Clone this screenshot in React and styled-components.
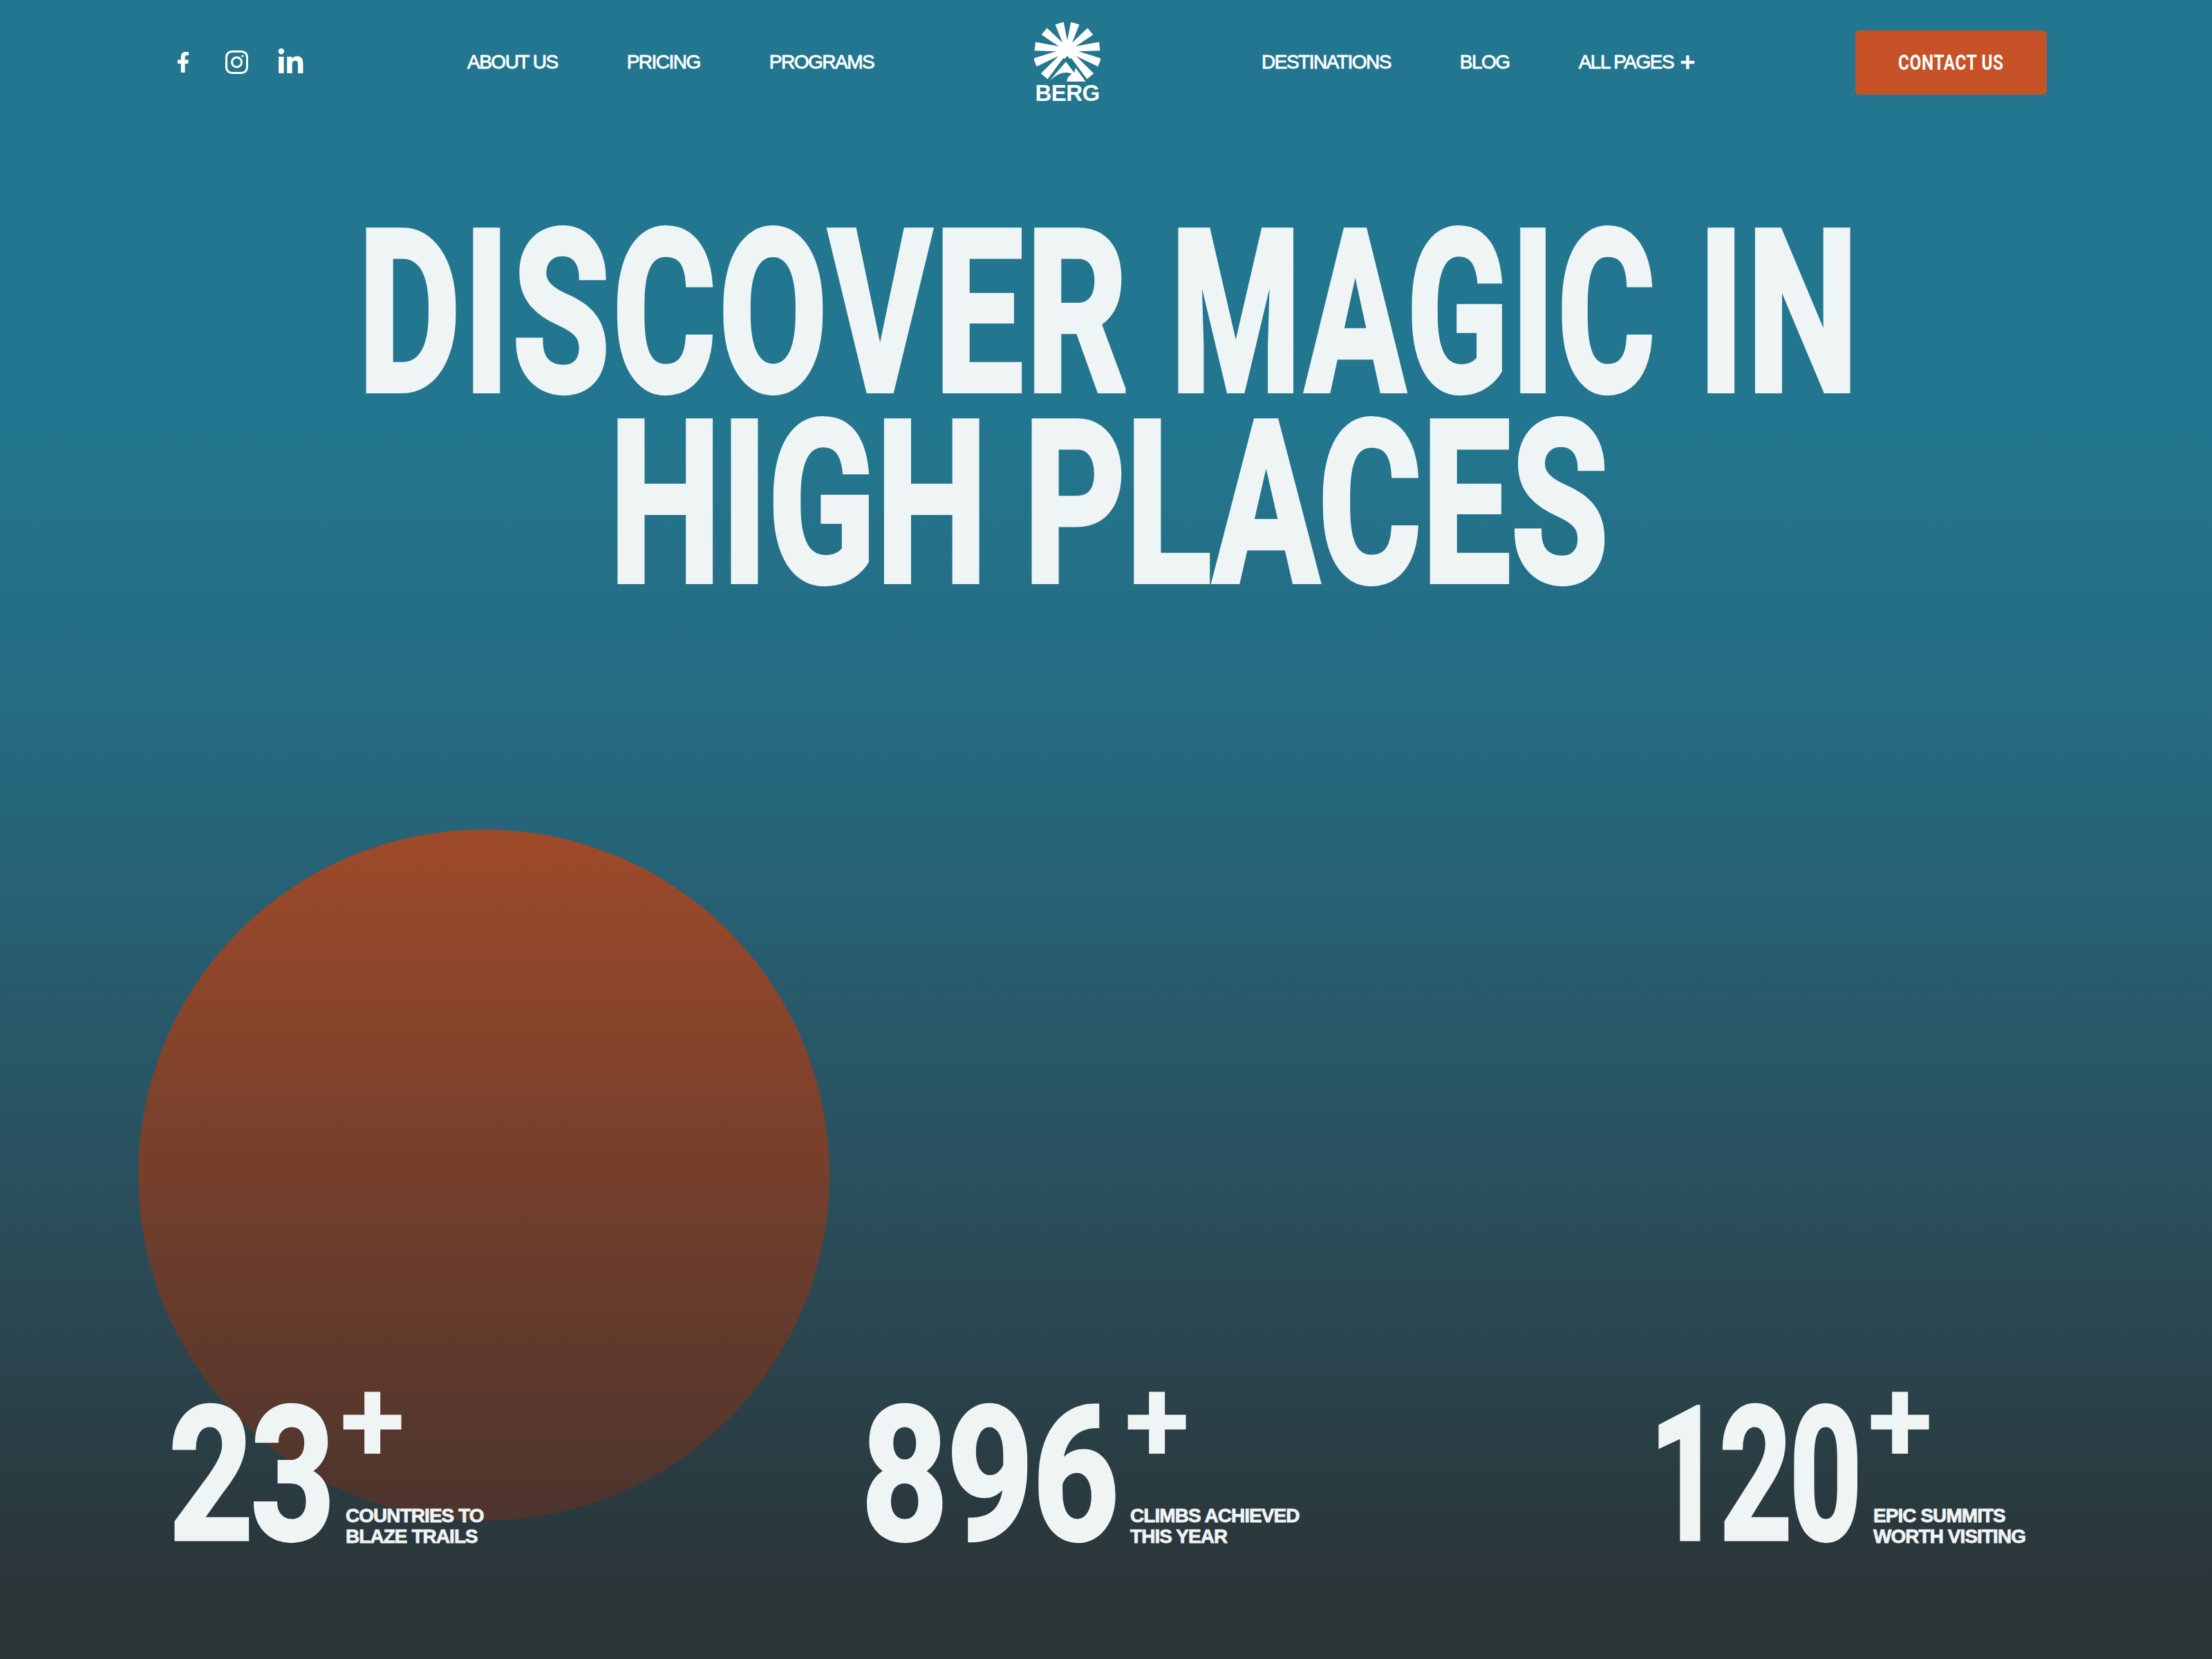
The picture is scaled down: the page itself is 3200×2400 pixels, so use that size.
import React from "react";
import styled, { createGlobalStyle } from "styled-components";
import { FaFacebookF, FaLinkedinIn } from "react-icons/fa";

const GlobalStyle = createGlobalStyle`
  html, body { margin: 0; padding: 0; background: #2a3336; }
  * { box-sizing: border-box; }
`;

const Page = styled.div`
  position: relative;
  width: 3200px;
  height: 2400px;
  overflow: hidden;
  display: flex;
  flex-direction: column;
  color: #eff4f5;
  font-family: "Liberation Sans", Arial, sans-serif;
  background: linear-gradient(180deg, #23768f 0%, #23768f 26%, #25697f 45%, #2a4f5c 72%, #2a3437 96%, #2a3336 100%);
`;

const Sun = styled.div`
  position: absolute;
  left: 200px;
  top: 1200px;
  width: 1000px;
  height: 1000px;
  border-radius: 50%;
  background: linear-gradient(180deg, #9e4a2a 0%, #4c342d 100%);
`;

const Nav = styled.nav`
  position: relative;
  display: grid;
  grid-template-columns: 426px 820px 329px 859px 277px;
  align-items: center;
  height: 180px;
  padding-left: 250px;
`;

const Socials = styled.div`
  display: flex;
  align-items: center;
  gap: 41px;
  color: #fff;
`;

const FacebookIcon = styled(FaFacebookF)`
  margin-right: 5px;
`;

const Links = styled.div`
  display: flex;
  align-items: center;
  gap: 100px;
`;

const NavLink = styled.a`
  display: flex;
  align-items: center;
  font-size: 28px;
  line-height: 34px;
  letter-spacing: -1.5px;
  -webkit-text-stroke: 0.8px #fff;
  color: #fff;
  white-space: nowrap;
`;

const PlusMark = styled.span`
  margin-left: 9px;
  font-size: 38px;
  line-height: 34px;
  font-weight: 700;
  -webkit-text-stroke: 0;
`;

const Logo = styled.div`
  display: flex;
  flex-direction: column;
  align-items: center;
  width: 96px;
`;

const LogoText = styled.span`
  margin-top: 3px;
  font-size: 33px;
  line-height: 28px;
  font-weight: 700;
  letter-spacing: -0.6px;
  color: #fff;
`;

const ContactButton = styled.button`
  width: 277px;
  height: 93px;
  border: 0;
  border-radius: 6px;
  background: #c75227;
  color: #fff;
  display: flex;
  align-items: center;
  justify-content: center;
`;

const ButtonLabel = styled.span`
  font-family: Roboto, sans-serif;
  font-weight: 700;
  font-size: 32px;
  letter-spacing: 0.8px;
  transform: scaleX(0.76);
  white-space: nowrap;
`;

const Heading = styled.h1`
  position: relative;
  margin: 136px 0 0 10px;
  display: flex;
  flex-direction: column;
  align-items: center;
  font-family: Roboto, sans-serif;
  font-weight: 700;
  font-size: 326px;
  line-height: 276px;
  white-space: nowrap;
  -webkit-text-stroke: 8px #eff4f5;
`;

const HeadingLine = styled.span`
  display: block;
  transform: scaleX(0.7);
  letter-spacing: ${(p) => p.$spacing}px;
  word-spacing: ${(p) => p.$wordSpacing}px;
`;

const NarrowWord = styled.span`
  display: inline-block;
  transform: scaleX(0.945);
`;

const Stats = styled.div`
  position: relative;
  margin-top: auto;
  display: grid;
  grid-template-columns: 1001px 1143px auto;
  padding: 0 0 166px 250px;
`;

const Stat = styled.div`
  display: flex;
  align-items: flex-end;
`;

const Figure = styled.div`
  width: ${(p) => p.$width}px;
  height: 197px;
  font-family: Roboto, sans-serif;
  font-weight: 700;
  font-size: 270px;
  line-height: 197px;
  white-space: nowrap;
  letter-spacing: ${(p) => p.$spacing}px;
  -webkit-text-stroke: 5px #eff4f5;
  transform-origin: left center;
  transform: translateX(${(p) => p.$shift}px) scaleX(${(p) => p.$scale});
`;

const StatSide = styled.div`
  display: flex;
  flex-direction: column;
  justify-content: space-between;
  height: 222px;
  margin-bottom: -4px;
`;

const Plus = styled.span`
  font-family: Roboto, sans-serif;
  font-weight: 700;
  font-size: 172px;
  line-height: 80px;
  height: 80px;
  margin-left: -8px;
`;

const StatLabel = styled.div`
  font-size: 28px;
  line-height: 30px;
  font-weight: 700;
  letter-spacing: -0.95px;
  -webkit-text-stroke: 0.8px #eff4f5;
  white-space: nowrap;
`;

const InstagramIcon = () => (
  <svg width="33" height="34" viewBox="0 0 33 34" fill="none" stroke="#fff" strokeWidth="3">
    <rect x="1.5" y="1.5" width="30" height="31" rx="8" />
    <circle cx="16.5" cy="17" r="7" />
    <circle cx="25" cy="8" r="1.6" fill="#fff" stroke="none" />
  </svg>
);

// rays of the sun, tapered toward the middle of the mark
const rays = [
  [-34, -115], [34, -115], [-100, -80], [100, -80], [-140, -15],
  [140, -15], [-140, 55], [140, 55], [-100, 115], [100, 115],
];

const LogoMark = () => (
  <svg width="96" height="86" viewBox="108 60 288 258">
    {rays.map(([dx, dy]) => {
      const len = Math.hypot(dx, dy);
      const nx = -dy / len;
      const ny = dx / len;
      const x = 252 + dx;
      const y = 180 + dy;
      return (
        <polygon
          key={`${dx}${dy}`}
          fill="#fff"
          points={`${x + nx * 19},${y + ny * 19} ${x - nx * 19},${y - ny * 19} ${252 - nx * 8},${180 - ny * 8} ${252 + nx * 8},${180 + ny * 8}`}
        />
      );
    })}
    <circle cx="252" cy="180" r="40" fill="#fff" />
    <polygon points="252,206 344,318 160,318" fill="#23768f" />
    <path d="M246 232 L172 318 C205 285 240 270 272 285 C262 292 252 298 250 318 L332 318 L288 258 L282 280 Z" fill="#fff" />
  </svg>
);

const stats = [
  { value: "23", width: 250, scale: 0.79, spacing: -5, shift: -6, label: ["COUNTRIES TO", "BLAZE TRAILS"] },
  { value: "896", width: 384, scale: 0.81, spacing: -2, shift: -5, label: ["CLIMBS ACHIEVED", "THIS YEAR"] },
  { value: "120", width: 316, scale: 0.68, spacing: -6, shift: -8, label: ["EPIC SUMMITS", "WORTH VISITING"] },
];

export default function App() {
  return (
    <Page>
      <GlobalStyle />
      <Sun />
      <Nav>
        <Socials>
          <FacebookIcon size={30} />
          <InstagramIcon />
          <FaLinkedinIn size={41} />
        </Socials>
        <Links>
          <NavLink>ABOUT US</NavLink>
          <NavLink>PRICING</NavLink>
          <NavLink>PROGRAMS</NavLink>
        </Links>
        <Logo>
          <LogoMark />
          <LogoText>BERG</LogoText>
        </Logo>
        <Links>
          <NavLink>DESTINATIONS</NavLink>
          <NavLink>BLOG</NavLink>
          <NavLink>
            ALL PAGES<PlusMark>+</PlusMark>
          </NavLink>
        </Links>
        <ContactButton>
          <ButtonLabel>CONTACT US</ButtonLabel>
        </ContactButton>
      </Nav>
      <Heading>
        <HeadingLine $spacing={6} $wordSpacing={-33}>
          DISCOVER <NarrowWord>MAGIC</NarrowWord> IN
        </HeadingLine>
        <HeadingLine $spacing={1} $wordSpacing={-8}>HIGH PLACES</HeadingLine>
      </Heading>
      <Stats>
        {stats.map((s) => (
          <Stat key={s.value}>
            <Figure $width={s.width} $scale={s.scale} $spacing={s.spacing} $shift={s.shift}>{s.value}</Figure>
            <StatSide>
              <Plus>+</Plus>
              <StatLabel>
                {s.label[0]}
                <br />
                {s.label[1]}
              </StatLabel>
            </StatSide>
          </Stat>
        ))}
      </Stats>
    </Page>
  );
}
